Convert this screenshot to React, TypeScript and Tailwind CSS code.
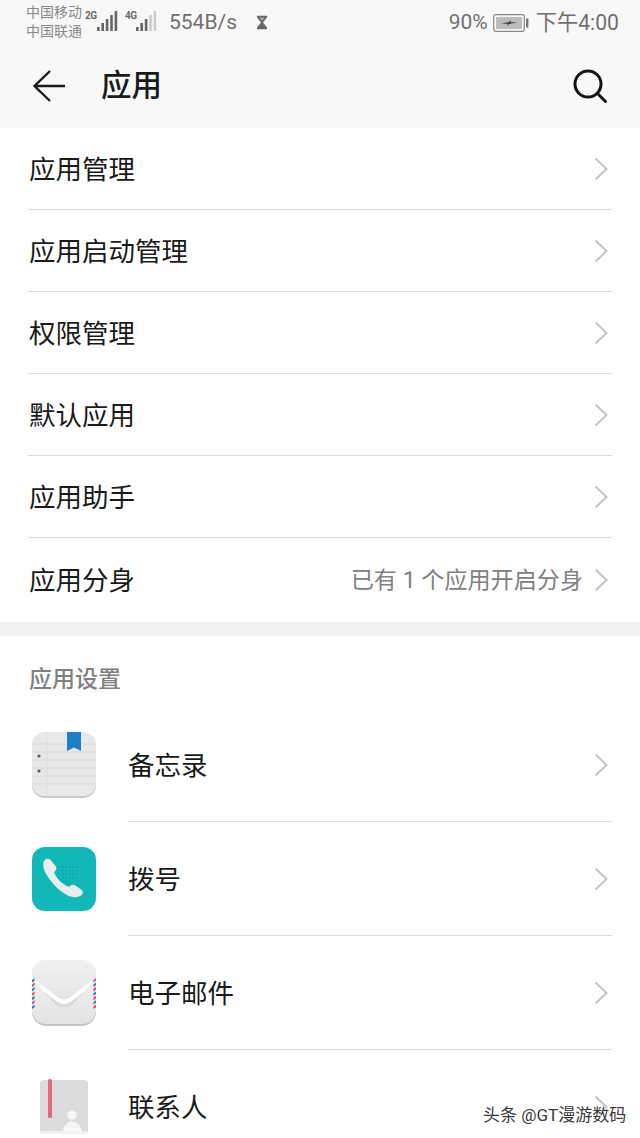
import React from "react";

const CJK = "font-['Roboto','Noto_Sans_CJK_SC',sans-serif]";

function Chevron() {
  return (
    <svg width="16" height="26" viewBox="0 0 16 26" fill="none" className="shrink-0">
      <path d="M2.5 2.5 L13.5 13 L2.5 23.5" stroke="#c4c4c4" strokeWidth="2" />
    </svg>
  );
}

function Signal({ levels }: { levels: number }) {
  const hs = [4, 8, 12, 16, 20];
  return (
    <svg width="21" height="20" viewBox="0 0 21 20">
      {hs.map((h, i) => (
        <rect key={i} x={i * 4.4} y={20 - h} width="2.6" height={h} fill={i < levels ? "#666" : "#ccc"} />
      ))}
    </svg>
  );
}

function Row({ label }: { label: string }) {
  return (
    <div className="h-[82px] mx-7 border-b border-[#dcdcdc] flex items-center">
      <span className="text-[26.5px] pt-[2px] text-[#1a1a1a] ml-px flex-1">{label}</span>
      <span className="mr-[3px]"><Chevron /></span>
    </div>
  );
}

function NotesIcon() {
  return (
    <svg width="66" height="66" viewBox="0 0 66 66">
      <rect x="1" y="2" width="64" height="64" rx="13" fill="#c9c9c9" />
      <rect x="1" y="0" width="64" height="64" rx="13" fill="#e8e8e8" />
      {[12, 20, 28, 36, 44, 52].map((y) => (
        <line key={y} x1="1" x2="65" y1={y} y2={y} stroke="#dbdbdb" strokeWidth="1" />
      ))}
      <line x1="16" x2="16" y1="0" y2="64" stroke="#dbdbdb" strokeWidth="1" />
      <circle cx="8" cy="24" r="1.6" fill="#555" />
      <circle cx="8" cy="39" r="1.6" fill="#555" />
      <path d="M36 0 H50 V19 L43 15.5 L36 19 Z" fill="#1f7fc9" />
    </svg>
  );
}

function DialIcon() {
  return (
    <svg width="66" height="66" viewBox="0 0 66 66">
      <rect x="1" y="1" width="64" height="64" rx="13" fill="#12b8b8" />
      <g fill="#0ca3a3">
        {[0, 1, 2, 3, 4, 5].map((a) =>
          [0, 1, 2, 3, 4, 5].map((b) => <circle key={`${a}${b}`} cx={28 + a * 3.6} cy={21 + b * 3.6} r="0.9" />)
        )}
      </g>
      <path
        d="M13 15 C15 12 18 12 20 14.5 L24.5 20 C26 22 25.5 24.5 23 26 C25 32 31 38 38 41 C40 38.5 42.5 38 44.5 39.5 L50 43.5 C52.5 45.5 52.5 48 50 49.5 C46 52 41 52 35 48.5 C26 43 19 35 14.5 27 C12 22 11.5 18 13 15 Z"
        fill="#e8efee"
      />
    </svg>
  );
}

function MailIcon() {
  return (
    <svg width="66" height="66" viewBox="0 0 66 66">
      <defs>
        <linearGradient id="mailTop" x1="0" y1="0" x2="0" y2="1">
          <stop offset="0" stopColor="#f1f1f1" />
          <stop offset="1" stopColor="#e4e4e4" />
        </linearGradient>
        <linearGradient id="mailBottom" x1="0" y1="0" x2="0" y2="1">
          <stop offset="0" stopColor="#f7f7f7" />
          <stop offset="1" stopColor="#e2e2e2" />
        </linearGradient>
      </defs>
      <rect x="1" y="2" width="64" height="64" rx="14" fill="#c6c6c6" />
      <rect x="1" y="0" width="64" height="64" rx="14" fill="url(#mailBottom)" />
      <path d="M1 14 A14 14 0 0 1 15 0 H51 A14 14 0 0 1 65 14 V19 L38 38 Q33 41 28 38 L1 19 Z" fill="url(#mailTop)" />
      <path d="M3 19 L28 38 Q33 41 38 38 L63 19 L56 29 L40 42 Q33 46 26 42 L10 29 Z" fill="#fdfdfd" />
      <path d="M13 32 L26 42 Q33 46 40 42 L53 32 L41 45 Q33 49 25 45 Z" fill="#cfcfcf" opacity="0.55" />
      {[0, 1, 2, 3, 4, 5, 6].map((i) => (
        <g key={i}>
          <path d={`M1 ${20 + i * 4.4} l2.6 -1.8 v2.6 l-2.6 1.8 z`} fill={i % 2 ? "#d4506f" : "#2f7fb8"} />
          <path d={`M62.4 ${20 + i * 4.4} l2.6 -1.8 v2.6 l-2.6 1.8 z`} fill={i % 2 ? "#2f7fb8" : "#d4506f"} />
        </g>
      ))}
    </svg>
  );
}

function ContactIcon() {
  return (
    <svg width="50" height="56" viewBox="0 0 50 56">
      <rect x="1" y="1" width="48" height="54" rx="4" fill="#dcdbdd" />
      <rect x="9" y="0" width="4" height="39" rx="1.5" fill="#e8697d" />
      <circle cx="33" cy="36" r="4.6" fill="#f7f7f7" />
      <path d="M24 52 C25 45 29 42.5 33 42.5 C37 42.5 41 45 43 52 Z" fill="#f7f7f7" />
      <rect x="1" y="52" width="48" height="3" rx="1.5" fill="#f2f2f2" />
    </svg>
  );
}

function AppRow({ icon, label, border }: { icon: React.ReactNode; label: string; border: boolean }) {
  return (
    <div className="h-[114px] flex shrink-0">
      <div className="w-[128px] flex items-center justify-center shrink-0">{icon}</div>
      <div className={`flex-1 mr-7 flex items-center ${border ? "border-b border-[#dcdcdc]" : ""}`}>
        <span className="text-[26.5px] pt-[2px] text-[#1a1a1a] flex-1">{label}</span>
        <span className="mr-[3px]"><Chevron /></span>
      </div>
    </div>
  );
}

export default function App() {
  return (
    <div className={`w-[640px] h-[1138px] overflow-hidden relative bg-white ${CJK}`}>
      <div className="h-[128px] bg-[#f8f8f8] flex flex-col">
        <div className="h-[46px] flex items-center pl-[26px] pr-[21px] text-[#6b6b6b]">
          <div className="flex flex-col text-[14px] leading-[19px] w-[59px] text-[#8a8a8a] mt-[-3px]">
            <span>中国移动</span>
            <span>中国联通</span>
          </div>
          <div className="flex items-end gap-[7px] mt-[-5px]">
            <div className="flex items-start">
              <span className="text-[10px] font-bold leading-none w-[12px] tracking-[-0.5px]">2G</span>
              <Signal levels={5} />
            </div>
            <div className="flex items-start">
              <span className="text-[10px] font-bold leading-none w-[11px] tracking-[-0.5px]">4G</span>
              <Signal levels={3} />
            </div>
          </div>
          <span className="text-[21px] ml-[12px] text-[#707070] font-['Roboto',sans-serif]">554B/s</span>
          <svg width="12" height="15" viewBox="0 0 12 15" className="ml-[19px] mt-[-2px]">
            <path d="M1 .8 H11 V2.5 L7 7.5 L11 12.5 V14.2 H1 V12.5 L5 7.5 L1 2.5 Z" fill="#666" />
            <path d="M3.2 2.4 H8.8 L6 6 Z" fill="#a8a8a8" />
          </svg>
          <div className="flex-1" />
          <span className="text-[21px] text-[#707070]">90%</span>
          <svg width="36" height="18" viewBox="0 0 36 18" className="ml-[5px]">
            <rect x="0.7" y="0.7" width="30.6" height="16.6" rx="2" fill="none" stroke="#888" strokeWidth="1.2" />
            <rect x="3" y="3" width="26" height="12" fill="#bdbdbd" />
            <path d="M8 9.4 L16 8 L18 6 L17.5 8.3 L24 8.6 L16 10 L14 12 L14.5 9.7 Z" fill="#3a3a3a" />
            <rect x="33" y="4.5" width="2.4" height="9" fill="#777" />
          </svg>
          <span className="text-[21.2px] ml-[7px] text-[#707070]">下午4:00</span>
        </div>
        <div className="flex-1 flex items-center pl-[33px] pr-[33px] pb-[2px]">
          <svg width="32" height="32" viewBox="0 0 32 32" fill="none" stroke="#1a1a1a" strokeWidth="2.4">
            <path d="M17 1 L1.5 16 L17 31 M1.5 16 H32" />
          </svg>
          <span className="text-[30.5px] text-[#1a1a1a] ml-[36px] font-medium">应用</span>
          <div className="flex-1" />
          <svg width="34" height="34" viewBox="0 0 34 34" fill="none" stroke="#141414" strokeWidth="3">
            <circle cx="15" cy="15" r="13" />
            <path d="M24.5 24.5 L32.5 32.5" strokeLinecap="round" />
          </svg>
        </div>
      </div>

      <div className="flex flex-col">
        <Row label="应用管理" />
        <Row label="应用启动管理" />
        <Row label="权限管理" />
        <Row label="默认应用" />
        <Row label="应用助手" />
        <div className="h-[84px] mx-7 flex items-center">
          <span className="text-[26.5px] pt-[2px] text-[#1a1a1a] ml-px flex-1">应用分身</span>
          <span className="text-[23.1px] pt-[2px] text-[#808080] mr-[10px]">已有 1 个应用开启分身</span>
          <span className="mr-[3px]"><Chevron /></span>
        </div>
      </div>

      <div className="h-[14px] bg-[#f1f1f1]" />

      <div className="h-[72px] pl-[29px] pt-[29px] text-[23px] leading-[30px] text-[#808080] font-medium">应用设置</div>

      <AppRow icon={<NotesIcon />} label="备忘录" border />
      <AppRow icon={<DialIcon />} label="拨号" border />
      <AppRow icon={<MailIcon />} label="电子邮件" border />
      <AppRow icon={<ContactIcon />} label="联系人" border={false} />

      <div className="absolute left-[483px] top-[1103px] text-[17px] leading-[24px] text-[#3a3a3a] [text-shadow:0_0_2px_#fff,0_0_3px_#fff] whitespace-nowrap">
        头条 @GT漫游数码
      </div>
    </div>
  );
}
